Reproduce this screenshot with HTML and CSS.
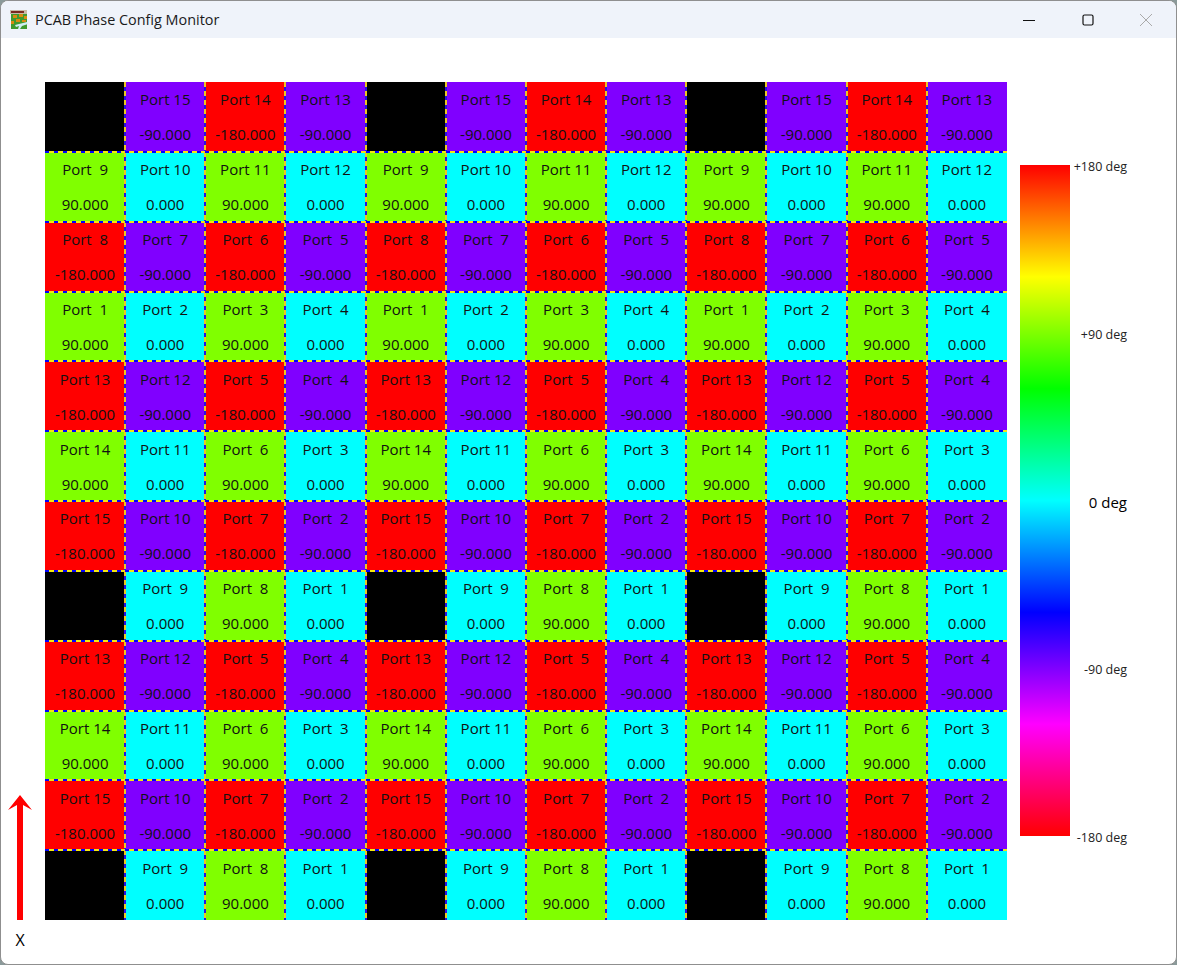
FILE: index.html
```html
<!DOCTYPE html>
<html lang="en">
<head>
    <meta charset="UTF-8">
    <title>PCAB Phase Config Monitor</title>
    <link rel="stylesheet" href="styles.css">
</head>
<body>
    <div class="window">
        <header class="title-bar">
            <svg class="app-icon" width="18" height="20" viewBox="0 0 18 20">
                <rect x="0" y="0" width="17" height="4" fill="#c9b8a6"/>
                <rect x="1" y="1" width="13" height="2" fill="#7a2a20"/>
                <rect x="1" y="4" width="16" height="15" fill="#3f9a2e"/>
                <rect x="3" y="5" width="4" height="3" fill="#d98a10"/>
                <rect x="9" y="4" width="4" height="3" fill="#d98a10"/>
                <rect x="14" y="6" width="3" height="3" fill="#d98a10"/>
                <rect x="6" y="9" width="4" height="3" fill="#d98a10"/>
                <rect x="12" y="10" width="4" height="2" fill="#d98a10"/>
                <rect x="1" y="11" width="3" height="3" fill="#d98a10"/>
                <path d="M5 15 L17 12 L18 14 L12 16 L10 19 L8 19 L9 16 L6 17 Z" fill="#cfeef2"/>
            </svg>
            <span class="app-title">PCAB Phase Config Monitor</span>
            <div class="window-controls">
                <svg class="win-btn" width="12" height="12" viewBox="0 0 12 12"><path d="M0 6.5 H12" stroke="#111" fill="none"/></svg>
                <svg class="win-btn" width="12" height="12" viewBox="0 0 12 12"><rect x="1" y="1" width="10" height="10" rx="1.5" stroke="#111" stroke-width="1.2" fill="none"/></svg>
                <svg class="win-btn" width="12" height="12" viewBox="0 0 12 12"><path d="M0 0 L12 12 M12 0 L0 12" stroke="#aaa" fill="none"/></svg>
            </div>
        </header>

        <main class="monitor">
            <svg class="x-arrow" width="24" height="125" viewBox="0 0 24 125">
                <polygon points="12,0 24,15 15,10 15,125 9,125 9,10 0,15" fill="#ff0000"/>
            </svg>
            <div class="phase-grid"></div>
            <aside class="legend">
                <div class="color-bar"></div>
                <div class="legend-labels">
                    <span class="legend-label">+180 deg</span>
                    <span class="legend-label">+90 deg</span>
                    <span class="legend-label legend-zero">0 deg</span>
                    <span class="legend-label">-90 deg</span>
                    <span class="legend-label">-180 deg</span>
                </div>
            </aside>
            <div class="x-label">X</div>
        </main>
    </div>

    <script>
        // One block of four columns, the panel repeats it three times across
        const top8 = [
            [null, [15, -90], [14, -180], [13, -90]],
            [[9, 90], [10, 0], [11, 90], [12, 0]],
            [[8, -180], [7, -90], [6, -180], [5, -90]],
            [[1, 90], [2, 0], [3, 90], [4, 0]],
            [[13, -180], [12, -90], [5, -180], [4, -90]],
            [[14, 90], [11, 0], [6, 90], [3, 0]],
            [[15, -180], [10, -90], [7, -180], [2, -90]],
            [null, [9, 0], [8, 90], [1, 0]]
        ];
        const rows = top8.concat(top8.slice(4));
        const phaseClass = { '-180': 'phase-red', '-90': 'phase-violet', '0': 'phase-cyan', '90': 'phase-lime' };

        const grid = document.querySelector('.phase-grid');
        rows.forEach(row => {
            for (let i = 0; i < 12; i++) {
                const port = row[i % 4];
                const cell = document.createElement('div');
                cell.className = 'cell ' + (port ? phaseClass[port[1]] : 'phase-off');
                if (port) {
                    const name = port[0] < 10 ? `Port  ${port[0]}` : `Port ${port[0]}`;
                    const value = port[1].toFixed(3);
                    cell.innerHTML = `<span class="cell-line">${name}</span><span class="cell-line">${value}</span>`;
                }
                grid.appendChild(cell);
            }
        });
    </script>
</body>
</html>
```

FILE: styles.css
```css
* {
    margin: 0;
    padding: 0;
    box-sizing: border-box;
}

body {
    background: #8b9a9a;
    font-family: 'Open Sans', 'Noto Sans', sans-serif;
    color: #000;
}

.window {
    width: 1177px;
    height: 965px;
    background: #fff;
    border: 1px solid #8f8f8f;
    border-radius: 8px;
    overflow: hidden;
}

.title-bar {
    display: flex;
    align-items: center;
    height: 37px;
    background: #eff3fa;
    padding-left: 9px;
}

.app-icon {
    margin-right: 7px;
}

.app-title {
    font-size: 14.4px;
    color: #1a1a1a;
}

.window-controls {
    display: flex;
    gap: 46.5px;
    margin-left: auto;
    margin-right: 24px;
}

.monitor {
    display: grid;
    grid-template-columns: 44px 962px auto;
    grid-template-rows: 838px auto;
    padding-top: 44px;
}

.x-arrow {
    align-self: end;
    margin-left: 7px;
}

.x-label {
    grid-column: 1;
    width: 38px;
    margin-top: 9px;
    text-align: center;
    font-size: 16px;
    line-height: 22px;
}

.phase-grid {
    display: grid;
    grid-template-columns: repeat(12, 1fr);
    grid-template-rows: repeat(12, 1fr);
}

.cell {
    position: relative;
    display: grid;
    grid-template-rows: 1fr 1fr;
    text-align: center;
    font-size: 15px;
}

.cell-line {
    align-self: center;
    white-space: pre;
    color: #111;
}

/* two colour dashed separators, they sit across the cell edge */
.cell::before {
    content: '';
    position: absolute;
    top: 0;
    bottom: 0;
    left: -1px;
    width: 2px;
    background: repeating-linear-gradient(to bottom, #ecc820 0 5px, #2a10e0 5px 9px);
}

.cell::after {
    content: '';
    position: absolute;
    top: -1px;
    left: 0;
    right: 0;
    height: 2px;
    background: repeating-linear-gradient(to right, #0000ff 0 4px, #f4e810 4px 9px);
}

.cell:nth-child(12n+1)::before,
.cell:nth-child(-n+12)::after {
    display: none;
}

.phase-off { background: #000; }
.phase-red { background: #ff0000; }
.phase-violet { background: #8000ff; }
.phase-cyan { background: #00ffff; }
.phase-lime { background: #80ff00; }

.legend {
    display: flex;
    margin: 83px 0 0 13px;
    height: 671px;
}

.color-bar {
    width: 50px;
    background: linear-gradient(to bottom, #ff0000, #ffff00, #00ff00, #00ffff, #0000ff, #ff00ff, #ff0000);
}

.legend-labels {
    display: flex;
    flex-direction: column;
    justify-content: space-between;
    width: 57px;
    padding-top: 2px;
    margin-bottom: -2px;
    text-align: right;
}

.legend-label {
    height: 0;
    line-height: 0;
    font-size: 12.5px;
    color: #222;
}

.legend-zero {
    font-size: 15px;
    color: #000;
    margin-top: -1px;
}
```
